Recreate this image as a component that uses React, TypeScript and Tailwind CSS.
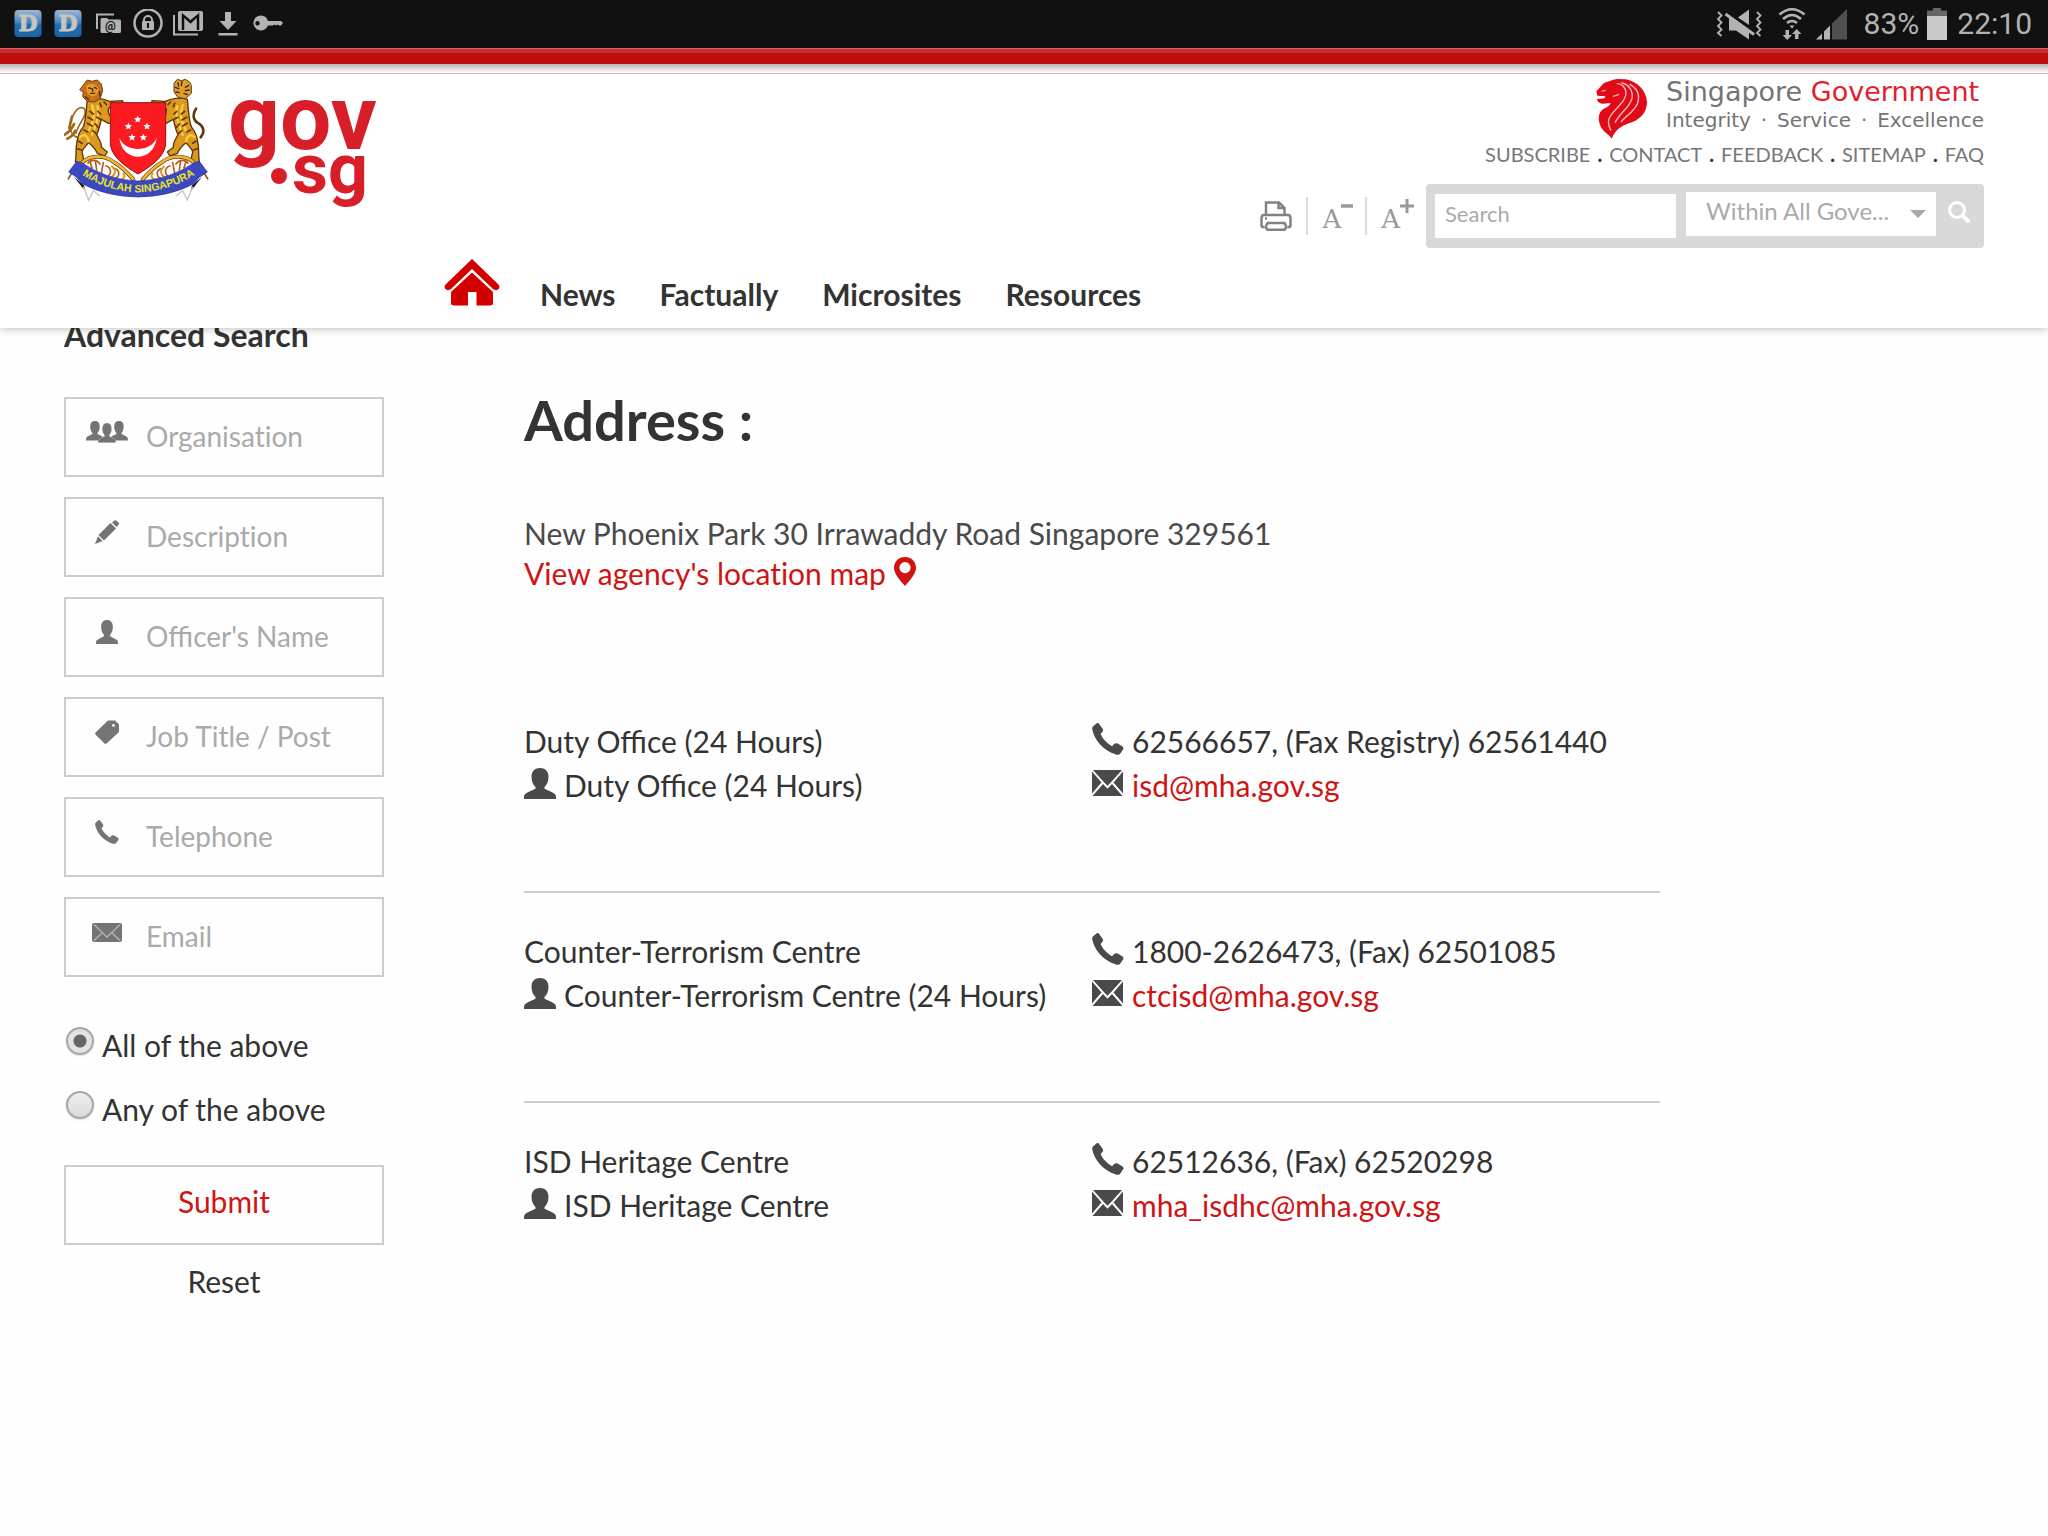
import type { ReactNode } from "react";

/* ---------- shared glyphs ---------- */

const userPath =
  "M16 0C21 0 24.5 3 24.5 9C24.5 14 23 17 20.5 19.5V21.5C24 23.5 28 24.5 31 27C32 28 32 29.5 32 32H0C0 29.5 0 28 1 27C4 24.5 8 23.5 11.500 21.500V19.500C9 17 7.500 14 7.500 9C7.500 3 11 0 16 0Z";

const phonePath =
  "M6.500 0.300L10.500 5.500C11.500 7 11.200 8 10.200 9.200L8.600 11C10.500 15.500 15 20.500 20 23.200L22.500 20.800C23.500 20 24.500 20 25.700 20.600L30.500 23.600C31.500 24.400 31.700 25.200 31.200 26.200L28.500 30.200C27.500 31.600 26 32 24 31.500C11 27.500 2 16.500 0.300 6.500C0 4.800 0.300 3.800 1.500 3L4.800 0.300C5.500 -0.200 6 -0.200 6.500 0.300Z";

function UserIcon({ className }: { className: string }) {
  return (
    <svg viewBox="0 0 32 32" className={className} preserveAspectRatio="none" fill="currentColor" aria-hidden="true">
      <path d={userPath} />
    </svg>
  );
}

function PhoneIcon({ className }: { className: string }) {
  return (
    <svg viewBox="0 0 32 32" className={className} fill="currentColor" aria-hidden="true">
      <path d={phonePath} />
    </svg>
  );
}

function MailIcon() {
  return (
    <svg viewBox="0 0 31 26" className="h-[26px] w-[31px]" fill="#4a4a4a" aria-hidden="true">
      <path d="M1 0H30L18.500 12.800L15.500 15.800L12.500 12.800Z" />
      <path d="M0 1.500L9.500 12.500L0 23.500Z" />
      <path d="M31 1.500L21.500 12.500L31 23.500Z" />
      <path d="M11 14L15.500 18.700L20 14L30.500 26H0.500Z" />
    </svg>
  );
}

/* ---------- status bar ---------- */

function DIcon() {
  return (
    <svg viewBox="0 0 30 30" className="size-[30px]" aria-hidden="true">
      <defs>
        <linearGradient id="dGrad" x1="0" y1="0" x2="0" y2="1">
          <stop offset="0" stopColor="#9fb9d6" />
          <stop offset="0.45" stopColor="#4a87c0" />
          <stop offset="0.55" stopColor="#1f6db2" />
          <stop offset="1" stopColor="#1a64a8" />
        </linearGradient>
      </defs>
      <rect x="1.500" y="1" width="27" height="27" rx="4" fill="url(#dGrad)" />
      <text x="15" y="22" textAnchor="middle" fontSize="22" fontWeight="900" fontFamily="'DejaVu Serif', serif" fill="#c9c4bc" stroke="#c9c4bc">
        D
      </text>
    </svg>
  );
}

function StatusBar() {
  return (
    <div className="flex h-12 items-center justify-between bg-[#111] pr-4 pl-[13px] font-['Roboto',sans-serif] text-[30px] leading-9 text-[#b3b3b3]">
      <div className="flex items-center gap-2.5">
        <DIcon />
        <DIcon />
        <svg viewBox="0 0 30 30" className="size-[30px]" fill="none" aria-hidden="true">
          <path d="M4 20V5.500H21" stroke="#b3b3b3" strokeWidth="2" />
          <path d="M9 9H14L15.500 10.500H26.500Q28 10.500 28 12V22.500Q28 24 26.500 24H9Q7.500 24 7.500 22.500V10.500Q7.500 9 9 9Z" fill="#b3b3b3" />
          <text x="17.500" y="20.500" textAnchor="middle" fontSize="12" fontWeight="700" fontFamily="Roboto, sans-serif" fill="#111">
            @
          </text>
        </svg>
        <svg viewBox="0 0 30 30" className="size-[30px]" fill="none" aria-hidden="true">
          <circle cx="15" cy="14" r="13.500" stroke="#b3b3b3" strokeWidth="2.500" />
          <path d="M11 13V11A4 4 0 0 1 19 11V13" stroke="#b3b3b3" strokeWidth="2" />
          <rect x="9" y="12" width="12" height="9" rx="1" fill="#b3b3b3" />
          <path d="M15 14V19" stroke="#111" strokeWidth="2" />
        </svg>
        <svg viewBox="0 0 30 30" className="size-[30px]" fill="none" aria-hidden="true">
          <path d="M1 6V25.500H25" stroke="#b3b3b3" strokeWidth="2" />
          <rect x="5" y="2" width="25" height="20" rx="2" fill="#b3b3b3" />
          <path d="M10 21V6L17.500 13L25 6V21" stroke="#111" strokeWidth="2.500" />
          <path d="M8 3.500H27L17.500 10.500Z" fill="#b3b3b3" />
        </svg>
        <svg viewBox="0 0 30 30" className="size-[30px]" fill="#b3b3b3" aria-hidden="true">
          <path d="M12 3H18V12H23.500L15 21L6.500 12H12Z" />
          <rect x="5.500" y="24" width="19" height="2.500" />
        </svg>
        <svg viewBox="0 0 30 30" className="size-[30px]" fill="#b3b3b3" aria-hidden="true">
          <path
            fillRule="evenodd"
            d="M8 6.500A7.500 7.500 0 0 1 15 12H28L30 14L28 16.500H26L24.500 15.500L23 16.500L21.500 15.500L20 16.500H15A7.500 7.500 0 1 1 8 6.500ZM4.500 12A2.200 2.200 0 1 0 4.500 16.400A2.200 2.200 0 1 0 4.500 12Z"
          />
        </svg>
      </div>
      <div className="flex items-center">
        <svg viewBox="0 0 48 32" className="h-8 w-12" fill="none" stroke="#b3b3b3" strokeWidth="1.800" aria-hidden="true">
          <path d="M2 4L5.500 7.500L2 11L5.500 14.500L2 18L5.500 21.500L2 25L5.500 28" />
          <path d="M41 4L44.500 7.500L41 11L44.500 14.500L41 18L44.500 21.500L41 25L44.500 28" />
          <path d="M33 1.500V17L22 9.500ZM13 9L33 23V31.500L20 22.500H13Z" fill="#b3b3b3" stroke="none" />
          <path d="M9.500 6L38 26.500" strokeWidth="3" />
        </svg>
        <svg viewBox="0 0 28 34" className="ml-3.5 h-[34px] w-7" fill="none" stroke="#b3b3b3" strokeWidth="2.600" aria-hidden="true">
          <path d="M1.500 7.500Q14 -3 26.500 7.500M5 12Q14 4 23 12M9 16Q14 12 19 16" />
          <path d="M11.500 18.500H16.500L14 21.500Z" fill="#b3b3b3" stroke="none" />
          <path d="M7.500 23H11V28H14L9.300 33L4.500 28H7.500ZM17 32V27H14L18.700 22L23.500 27H20.500V32Z" fill="#b3b3b3" stroke="none" />
        </svg>
        <svg viewBox="0 0 32 32" className="ml-2.5 size-8" aria-hidden="true">
          <path d="M16 15.500L31 1V31.500H16Z" fill="#4f4f4f" />
          <path d="M0 31.500L6 25.500V31.500ZM8 23.500L14 17.500V31.500H8Z" fill="#b3b3b3" />
        </svg>
        <span className="ml-4">83%</span>
        <svg viewBox="0 0 20 32" className="ml-2 h-8 w-5" aria-hidden="true">
          <path d="M6 0H14V2.500H20V8H0V2.500H6Z" fill="#666" />
          <rect y="8" width="20" height="24" fill="#c9c9c9" />
        </svg>
        <span className="ml-2.5">22:10</span>
      </div>
    </div>
  );
}

/* ---------- logos ---------- */

const starPath =
  "M0 -11L3.200 -4L11 -3.300L5.100 1.700L7 9.400L0 5.400L-7 9.400L-5.100 1.700L-11 -3.300L-3.200 -4Z";

const stars = [
  [413, 358],
  [385, 379],
  [441, 379],
  [396, 412],
  [430, 412],
];

function Supporter({ tiger = false }: { tiger?: boolean }) {
  return (
    <g strokeLinejoin="round" strokeLinecap="round">
      {tiger ? (
        <path d="M222 412C206 392 216 376 232 368C248 356 244 338 236 326" fill="none" stroke="#5b3a12" strokeWidth="8" />
      ) : (
        <g fill="none" stroke="#a3671c">
          <path d="M232 412C206 404 204 366 222 342C234 318 254 318 256 334C256 356 234 372 228 400" strokeWidth="5" />
          <path d="M222 372C214 392 204 398 194 404M226 392C218 408 212 412 202 416M216 350L208 384" strokeWidth="8" />
        </g>
      )}
      {/* body and hind legs */}
      <path
        d="M262 298C280 290 312 296 328 304L368 302L370 310L330 320C322 328 324 340 330 346L350 352L348 368L326 370L304 358C300 376 296 392 290 404C296 416 306 428 304 442L322 456L314 468L292 460C286 446 276 436 266 428C258 438 248 446 246 456L252 482L236 492L226 484C230 468 226 448 230 432C232 414 236 396 248 384C258 368 258 330 262 298Z"
        fill="#dd981f"
        stroke="#5c360b"
        strokeWidth="4"
      />
      <path d="M276 316C286 340 280 368 266 392M292 318C300 340 290 372 276 404M240 412C250 400 262 404 266 424" fill="none" stroke="#f7cf45" strokeWidth="7" />
      <path
        d="M270 334L280 342M264 352L278 360M262 370L276 378M252 390L264 396M294 334L302 342M290 352L302 358M286 372L294 382M278 392L288 400M236 424L246 430M232 446L244 450M312 306L320 314M336 352L334 364M300 310L304 320"
        fill="none"
        stroke="#5c360b"
        strokeWidth="5"
      />
      {/* head */}
      {tiger ? (
        <g>
          <path d="M256 246L268 238L280 242L292 238L302 250L302 276L290 292L268 296L250 280L250 258Z" fill="#dfa02a" stroke="#5b3a12" strokeWidth="3" />
          <path d="M258 256L268 262M256 270L268 272M262 284L272 280M278 244L280 256M290 248L288 258M298 262L288 266M296 276L286 278" fill="none" stroke="#3f280d" strokeWidth="4" />
        </g>
      ) : (
        <g>
          <path d="M254 250L262 240L276 244L292 240L304 252L308 272L300 296L284 306L262 304L248 290L250 276L240 270Z" fill="#c96d16" stroke="#6b3f0c" strokeWidth="3" />
          <path d="M260 256C272 246 290 252 296 266C296 282 284 292 272 288C262 282 256 270 260 256Z" fill="#e59a2c" />
          <path d="M266 264L274 266M284 262L290 266M272 280L284 280M278 266L278 274M256 290L266 298M298 274L300 288" fill="none" stroke="#4d2a08" strokeWidth="4" />
        </g>
      )}
    </g>
  );
}

function Scroll() {
  return (
    <g fill="none" strokeLinecap="round">
      <path d="M400 538C384 520 366 500 344 488C314 462 268 466 246 488" stroke="#6b3f0c" strokeWidth="12" />
      <path d="M400 538C384 520 366 500 344 488C314 462 268 466 246 488" stroke="#efb52e" strokeWidth="8" />
      <path d="M264 490C272 478 290 478 300 492M276 504L270 484M290 510L286 482M304 520L310 488M322 530C336 520 334 502 318 498M344 536C360 530 360 512 346 506" stroke="#b85b1a" strokeWidth="5" />
      <path d="M334 532C346 524 350 510 336 500M364 538C374 534 376 526 370 520" stroke="#d99a2a" strokeWidth="6" />
    </g>
  );
}

function Emblem() {
  return (
    <svg viewBox="192 234 438 372" className="h-[124px] w-[146px]" role="img" aria-label="Singapore coat of arms">
      <defs>
        <path id="ribbonLine" d="M236 518Q318 574 414 577Q510 574 596 518" />
      </defs>
      <Supporter />
      <g transform="translate(824 0) scale(-1 1)">
        <Supporter tiger />
      </g>
      <Scroll />
      <g transform="translate(828 0) scale(-1 1)">
        <Scroll />
      </g>
      <path
        d="M331 308H497V428C497 470 448 502 414 522C380 502 331 470 331 428Z"
        fill="#fb1b20"
        stroke="#8a1519"
        strokeWidth="3"
      />
      <path d="M358 414C366 488 460 490 470 414C452 458 376 458 358 414Z" fill="#fff" />
      {stars.map(([x, y]) => (
        <path key={`${x}-${y}`} d={starPath} transform={`translate(${x} ${y})`} fill="#fff" />
      ))}
      <path d="M222 530L252 556L256 572L246 562ZM606 530L576 556L572 572L582 562Z" fill="#1c1c1c" />
      <path d="M250 560L266 600L280 572L300 588M578 560L562 600L548 572L528 588" fill="none" stroke="#c4c4c4" strokeWidth="4" />
      <path d="M204 538L216 518M624 538L612 518" stroke="#8a4a1a" strokeWidth="5" />
      <path
        d="M230 484L246 488Q320 540 414 543Q508 540 582 488L598 484L622 516L598 532L580 552Q508 590 414 591Q320 590 248 552L230 532L206 516Z"
        fill="#3c48c0"
        stroke="#2a3290"
        strokeWidth="2"
      />
      <text fontFamily="'Liberation Sans', sans-serif" fontWeight="700" fontSize="32" fill="#e8e61e">
        <textPath href="#ribbonLine" startOffset="50%" textAnchor="middle">
          MAJULAH SINGAPURA
        </textPath>
      </text>
    </svg>
  );
}

function GovLogo() {
  return (
    <svg
      viewBox="0 0 160 134"
      className="h-[134px] w-40"
      fill="#d81e28"
      fontFamily="Roboto, sans-serif"
      fontWeight="700"
      role="img"
      aria-label="gov.sg"
    >
      <text x="6" y="71" fontSize="91">
        gov
      </text>
      <circle cx="57" cy="98" r="8" />
      <text x="70" y="115" fontSize="70">
        sg
      </text>
    </svg>
  );
}

function LionHead() {
  return (
    <svg viewBox="105 231 159 183" className="h-[61px] w-[53px]" role="img" aria-label="Lion head symbol">
      <path
        d="M140 243C152 240 158 236 172 234L198 235C232 243 260 268 261 304C260 334 244 352 216 364C190 372 168 382 155 413C150 402 134 396 124 380C112 358 114 334 130 324C142 318 150 314 152 306L128 308C116 306 112 302 111 294L134 292L136 286L112 284L109 270C116 264 118 260 124 254C130 248 134 245 140 243Z"
        fill="#e20a17"
      />
      <g fill="none" stroke="#fff" strokeWidth="4" strokeLinecap="round">
        <path d="M172 248C186 248 197 260 198 274C200 300 168 320 152 344C144 356 142 366 152 388" strokeOpacity="0.750" />
        <path d="M186 246C206 250 220 270 216 292C208 322 178 336 166 364" strokeOpacity="0.750" />
        <path d="M210 250C234 264 240 286 232 308C222 332 196 346 184 362" strokeOpacity="0.750" />
        <path d="M160 286C166 282 170 284 176 280M126 270L136 268" strokeOpacity="0.600" />
      </g>
    </svg>
  );
}

/* ---------- header ---------- */

const topLinks = ["SUBSCRIBE", "CONTACT", "FEEDBACK", "SITEMAP", "FAQ"];
const navLinks = ["News", "Factually", "Microsites", "Resources"];

function Header() {
  return (
    <header className="relative z-10 bg-white shadow-[0_1px_8px_rgba(0,0,0,0.25)]">
      <div className="h-4 border-t border-[#e06060] bg-gradient-to-b from-[#c23030] from-25% to-[#c20d0d] to-25%" />
      <div className="h-2.5 border-b border-[#e9b5b8] bg-gradient-to-b from-[#b5b5b5] to-white" />
      <div className="flex items-start justify-between px-16 pt-1">
        <a href="#home" className="flex gap-3">
          <Emblem />
          <GovLogo />
        </a>
        <div className="flex flex-col items-end">
          <a href="#sg" className="flex h-[60px] items-start gap-[18px] font-['DejaVu_Sans',sans-serif] text-[#747474]">
            <LionHead />
            <span className="flex w-[318px] flex-col whitespace-nowrap">
              <span className="text-[27px] leading-7">
                Singapore <span className="text-[#e3202b]">Government</span>
              </span>
              <span className="flex justify-between text-[20px] leading-7">
                <span>Integrity</span>
                <span>·</span>
                <span>Service</span>
                <span>·</span>
                <span>Excellence</span>
              </span>
            </span>
          </a>
          <ul className="flex text-xl leading-8 text-[#777]">
            {topLinks.map((l, i) => (
              <li key={l} className="flex">
                {i > 0 && <span className="px-[7px] font-black text-[#333]">.</span>}
                <a href={`#${l.toLowerCase()}`}>{l}</a>
              </li>
            ))}
          </ul>
          <div className="mt-3.5 flex items-center">
            <button type="button" aria-label="Print" className="pr-3.5">
              <svg viewBox="0 0 32 30" className="h-[30px] w-8" fill="none" stroke="#828282" strokeWidth="2.500" aria-hidden="true">
                <path d="M6 14V1.500H19L24.500 7V14M18.500 1V7H24.500" />
                <path d="M4 26H3Q1.500 26 1.500 24V17Q1.500 14 4 14H28Q30.500 14 30.500 17V24Q30.500 26 29 26H28" />
                <path d="M7.500 22H24.500L26.500 26L24.500 28.700H7.500L5.500 26ZM5 17.500H7" />
              </svg>
            </button>
            <button
              type="button"
              aria-label="Decrease text size"
              className="flex h-[38px] border-l-2 border-[#dcdcdc] pr-3 pl-3.5 text-[#9a9a9a]"
            >
              <span className="font-['DejaVu_Serif',serif] text-[26px] leading-[44px]">A</span>
              <svg viewBox="0 0 12 12" className="mt-1 size-3" aria-hidden="true">
                <path d="M0 5H12" stroke="currentColor" strokeWidth="3.500" />
              </svg>
            </button>
            <button
              type="button"
              aria-label="Increase text size"
              className="flex h-[38px] border-l-2 border-[#dcdcdc] pr-3 pl-3.5 text-[#9a9a9a]"
            >
              <span className="font-['DejaVu_Serif',serif] text-[26px] leading-[44px]">A</span>
              <svg viewBox="0 0 14 14" className="mt-0.5 size-3.5" aria-hidden="true">
                <path d="M0 7H14M7 0V14" stroke="currentColor" strokeWidth="3" />
              </svg>
            </button>
            <form className="flex h-16 items-start rounded bg-[#d9d9d9] pt-2" onSubmit={(e) => e.preventDefault()}>
              <input
                type="search"
                aria-label="Search"
                placeholder="Search"
                className="mt-0.5 ml-[9px] h-11 w-[241px] bg-white px-2.5 pb-1.5 text-[22px] placeholder:text-[#aaa] placeholder:opacity-100"
              />
              <div className="ml-2.5 grid h-11 w-[250px] items-center bg-white">
                <select
                  aria-label="Search scope"
                  className="col-start-1 row-start-1 h-11 w-full appearance-none bg-transparent pb-1.5 pl-5 text-2xl text-[#aaa]"
                >
                  <option>Within All Gove...</option>
                </select>
                <svg viewBox="0 0 16 8" className="pointer-events-none col-start-1 row-start-1 mr-2.5 h-2 w-4 justify-self-end" aria-hidden="true">
                  <path d="M0 0H16L8 8Z" fill="#aaa" />
                </svg>
              </div>
              <button type="submit" aria-label="Search" className="flex h-10 items-center pr-3.5 pl-3">
                <svg viewBox="0 0 22 22" className="size-[22px]" fill="none" stroke="#fff" strokeLinecap="round" aria-hidden="true">
                  <circle cx="9" cy="9" r="7.500" strokeWidth="3" />
                  <path d="M15 15L20 20" strokeWidth="4" />
                </svg>
              </button>
            </form>
          </div>
        </div>
      </div>
      <nav className="flex h-20 items-end gap-10 pb-3.5 pl-[444px] text-[30px] leading-10 font-bold text-[#333]">
        <a href="#home" aria-label="Home" className="pb-2">
          <svg viewBox="0 0 56 47" className="h-[47px] w-14" fill="#d20000" aria-hidden="true">
            <path d="M28 0L54 25Q57 28 54 30.500Q51.500 32 49 30L28 10L7 30Q4.500 32 2 30.500Q-1 28 2 25Z" />
            <path d="M28 13.500L49 33V44Q49 46.500 46.500 46.500H32.500V33H24V46.500H9.500Q7 46.500 7 44V33Z" />
          </svg>
        </a>
        <ul className="flex gap-11">
          {navLinks.map((l) => (
            <li key={l}>
              <a href={`#${l.toLowerCase()}`}>{l}</a>
            </li>
          ))}
        </ul>
      </nav>
    </header>
  );
}

/* ---------- advanced search ---------- */

const fields: { label: string; icon: ReactNode; plain?: boolean }[] = [
  {
    label: "Organisation",
    plain: true,
    icon: (
      <svg viewBox="0 0 42 22" className="h-[22px] w-[42px]" fill="currentColor" aria-hidden="true">
        <path d={userPath} transform="translate(0 0) scale(0.560 0.610)" />
        <path d={userPath} transform="translate(24 0) scale(0.560 0.610)" />
        <path d={userPath} transform="translate(12 2) scale(0.560 0.620)" stroke="#fff" strokeWidth="0.500" />
      </svg>
    ),
  },
  {
    label: "Description",
    plain: true,
    icon: (
      <svg viewBox="0 0 24 24" className="size-6" fill="currentColor" aria-hidden="true">
        <path d="M17 2.500L19 0.700Q20.500 -0.300 22 1L23.300 2.300Q24.500 3.700 23.400 5L21.500 7Z" />
        <path d="M15.500 3L21 8.500L9 20.500L3.500 15Z" />
        <path d="M3 16.300L7.700 21L0 24Z" />
      </svg>
    ),
  },
  { label: "Officer's Name", icon: <UserIcon className="h-6 w-[22px]" /> },
  {
    label: "Job Title / Post",
    icon: (
      <svg viewBox="0 0 24 24" className="size-6" fill="currentColor" aria-hidden="true">
        <path fillRule="evenodd" d="M13 0.500H20L24 4.500V12L11.500 23.500Q10.500 24.300 9.500 23.500L0.500 14.500Q-0.300 13.500 0.500 12.500ZM18.500 4A1.400 1.400 0 1 0 18.500 6.800A1.400 1.400 0 1 0 18.500 4Z" />
      </svg>
    ),
  },
  { label: "Telephone", icon: <PhoneIcon className="size-6" /> },
  {
    label: "Email",
    icon: (
      <svg viewBox="0 0 30 19" className="h-[19px] w-[30px]" aria-hidden="true">
        <rect width="30" height="19" rx="2" fill="currentColor" />
        <path d="M2 1.500L15 14L28 1.500M2 17.500L10.500 9.500M28 17.500L19.500 9.500" fill="none" stroke="#b4b4b4" strokeWidth="1.300" />
      </svg>
    ),
  },
];

function AdvancedSearch() {
  return (
    <form className="flex w-80 shrink-0 flex-col" onSubmit={(e) => e.preventDefault()}>
      <h2 className="text-[32px] leading-10 font-bold">Advanced Search</h2>
      <div className="mt-[42px] flex flex-col gap-5">
        {fields.map(({ label, icon, plain }) => (
          <label key={label} className="flex h-20 items-center border-2 border-[#ccc]">
            <span className="ml-5 flex w-[42px] shrink-0 justify-center pb-2.5 text-[#747474]">{icon}</span>
            <input
              type="text"
              aria-label={label}
              placeholder={label}
              className={`ml-[18px] h-full w-full min-w-0 pb-0.5 text-[28px] placeholder:text-[#aaa] placeholder:opacity-100 ${
                plain ? "[font-variant-ligatures:none]" : ""
              }`}
            />
          </label>
        ))}
      </div>
      <div className="mt-12 flex flex-col gap-6 text-[30px] leading-10">
        {["All of the above", "Any of the above"].map((l, i) => (
          <label key={l} className="flex items-center pl-0.5">
            <input
              type="radio"
              name="match"
              defaultChecked={i === 0}
              className="mr-2 mb-2 size-7 appearance-none rounded-full border-2 border-[#a6a6a6] bg-gradient-to-b from-[#eee] to-[#dadada] shadow-[0_1px_2px_rgba(0,0,0,0.15)] checked:bg-[radial-gradient(circle,#666_0_6px,#e2e2e2_7px)]"
            />
            {l}
          </label>
        ))}
      </div>
      <button type="submit" className="mt-9 h-20 border-2 border-[#ccc] pb-2 text-[30px] text-[#d01414]">
        Submit
      </button>
      <button type="reset" className="mt-4 text-[30px] leading-10">
        Reset
      </button>
    </form>
  );
}

/* ---------- contact list ---------- */

const contacts = [
  { name: "Duty Office (24 Hours)", person: "Duty Office (24 Hours)", phone: "62566657, (Fax Registry) 62561440", email: "isd@mha.gov.sg" },
  { name: "Counter-Terrorism Centre", person: "Counter-Terrorism Centre (24 Hours)", phone: "1800-2626473, (Fax) 62501085", email: "ctcisd@mha.gov.sg" },
  { name: "ISD Heritage Centre", person: "ISD Heritage Centre", phone: "62512636, (Fax) 62520298", email: "mha_isdhc@mha.gov.sg" },
];

function Contacts() {
  return (
    <ul className="mt-[90px] flex flex-col">
      {contacts.map((c) => (
        <li
          key={c.email}
          className="grid grid-cols-2 border-b-2 border-[#ccc] pt-9 pb-[84px] leading-11 whitespace-nowrap last:border-b-0"
        >
          <div>
            <p>{c.name}</p>
            <p className="flex items-center gap-2">
              <span className="mb-1 text-[#4a4a4a]">
                <UserIcon className="h-[31px] w-8" />
              </span>
              {c.person}
            </p>
          </div>
          <div>
            <p className="flex items-center gap-2">
              <span className="mb-1 text-[#4a4a4a]">
                <PhoneIcon className="size-8" />
              </span>
              {c.phone}
            </p>
            <p className="flex items-center gap-[9px]">
              <span className="mb-1">
                <MailIcon />
              </span>
              <a href={`mailto:${c.email}`} className="text-[#d01414]">
                {c.email}
              </a>
            </p>
          </div>
        </li>
      ))}
    </ul>
  );
}

export default function App() {
  return (
    <div className="min-h-screen bg-[#fefefe] font-['Lato',sans-serif] text-[#333]">
      <StatusBar />
      <Header />
      <main className="-mt-[13px] flex gap-[140px] px-16">
        <AdvancedSearch />
        <section className="max-w-[1136px] flex-1 pt-[77px] text-[30px] leading-10">
          <h1 className="text-[56px] leading-14 font-bold">Address :</h1>
          <address className="mt-[65px] text-[#4a4a4a] not-italic">
            <p>New Phoenix Park 30 Irrawaddy Road Singapore 329561</p>
            <a href="#map" className="flex items-center gap-2 text-[#d01414] [font-variant-ligatures:none]">
              View agency's location map
              <svg viewBox="0 0 22 29" className="mb-1 h-[29px] w-[22px]" fill="currentColor" aria-hidden="true">
                <path
                  fillRule="evenodd"
                  d="M11 0C17.500 0 22 4.500 22 11C22 16.500 16 23.500 11 29C6 23.500 0 16.500 0 11C0 4.500 4.500 0 11 0ZM11 5A5.600 5.600 0 1 0 11 16.200A5.600 5.600 0 1 0 11 5Z"
                />
              </svg>
            </a>
          </address>
          <Contacts />
        </section>
      </main>
    </div>
  );
}
